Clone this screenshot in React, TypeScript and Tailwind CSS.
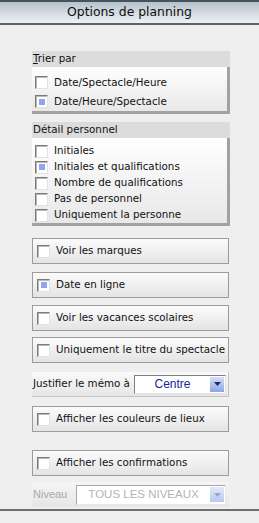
import React from 'react';

const Check: React.FC<{ checked?: boolean }> = ({ checked }) => (
  <span className="w-[13px] h-[13px] shrink-0 flex items-center justify-center bg-white border border-t-[#7a7a7a] border-l-[#7a7a7a] border-r-[#e2e2e2] border-b-[#e2e2e2] shadow-[inset_1px_1px_0_#b8b8b8]">
    {checked && <span className="w-[6px] h-[6px] bg-[#8fa5ec]" />}
  </span>
);

const GroupRow: React.FC<{ label: string; checked?: boolean; h: string }> = ({ label, checked, h }) => (
  <div className={`flex items-center gap-[6px] pl-[3px] ${h}`}>
    <Check checked={checked} />
    <span className="text-[10.3px] text-[#111]">{label}</span>
  </div>
);

const OptionBox: React.FC<{ label: string; checked?: boolean; mt: string }> = ({ label, checked, mt }) => (
  <div className={`w-[197px] h-[26px] ${mt} flex items-center gap-[6px] pl-[4px] border border-[#9c9c9c] bg-gradient-to-b from-[#fbfbfb] to-[#e4e4e4]`}>
    <Check checked={checked} />
    <span className="text-[10.3px] text-[#111]">{label}</span>
  </div>
);

const Arrow: React.FC<{ disabled?: boolean }> = ({ disabled }) => (
  <span
    className={`w-[14px] h-[15px] flex items-center justify-center bg-gradient-to-b ${
      disabled ? 'from-[#e2e9f8] to-[#b8c8ee]' : 'from-[#d6e0f6] to-[#8aa6e6]'
    }`}
  >
    <svg width="7" height="4" viewBox="0 0 7 4">
      <path d="M0 0 H7 L3.5 4 Z" fill={disabled ? '#9aa6c4' : '#1c2a5c'} />
    </svg>
  </span>
);

export default function App() {
  return (
    <div className="w-[259px] h-[523px] bg-[#efefef] flex flex-col font-['DejaVu_Sans',sans-serif] overflow-hidden">
      <div className="h-[25px] shrink-0 border-t-2 border-b-2 border-t-[#48525a] border-b-[#5a6266] bg-gradient-to-b from-[#b6c2cb] via-[#d2dae0] to-[#eef2f3] flex items-center justify-center">
        <span className="text-[12.4px] text-[#0e0e0e] leading-none">Options de planning</span>
      </div>

      <div className="pl-[32px] pt-[26px] flex flex-col">
        {/* Trier par */}
        <div className="w-[198px] h-[16px] bg-[#dcdcdc] flex items-center pl-[1px] text-[10.3px] text-[#111]">
          <span>
            <span className="underline">T</span>rier par
          </span>
        </div>
        <div className="w-[198px] pt-[6px] bg-gradient-to-b from-white to-[#e8e8e8] border-r-[3px] border-b-[3px] border-[#a2a2a2]">
          <GroupRow label="Date/Spectacle/Heure" h="h-[19px]" />
          <GroupRow label="Date/Heure/Spectacle" checked h="h-[19px]" />
        </div>

        {/* Détail personnel */}
        <div className="w-[198px] h-[16px] mt-[8px] bg-[#dcdcdc] flex items-center pl-[1px] text-[10.3px] text-[#111]">
          Détail personnel
        </div>
        <div className="w-[198px] pt-[5px] bg-gradient-to-b from-white to-[#e8e8e8] border-r-[3px] border-b-[3px] border-[#a2a2a2]">
          <GroupRow label="Initiales" h="h-[16px]" />
          <GroupRow label="Initiales et qualifications" checked h="h-[16px]" />
          <GroupRow label="Nombre de qualifications" h="h-[16px]" />
          <GroupRow label="Pas de personnel" h="h-[16px]" />
          <GroupRow label="Uniquement la personne" h="h-[16px]" />
        </div>

        <OptionBox label="Voir les marques" mt="mt-[12px]" />
        <OptionBox label="Date en ligne" checked mt="mt-[8px]" />
        <OptionBox label="Voir les vacances scolaires" mt="mt-[7px]" />
        <OptionBox label="Uniquement le titre du spectacle" mt="mt-[6px]" />

        {/* Justifier */}
        <div className="w-[197px] h-[25px] mt-[9px] flex items-center pl-[1px] border-r border-b border-[#c4c4c4] bg-gradient-to-b from-[#fafafa] to-[#e6e6e6]">
          <span className="text-[10.3px] text-[#111] w-[101px]">Justifier le mémo à</span>
          <div className="w-[92px] h-[19px] flex items-center bg-white border border-t-[#808080] border-l-[#808080] border-r-[#e4e4e4] border-b-[#e4e4e4] pr-[1px]">
            <span className="flex-1 text-center font-['Liberation_Sans',sans-serif] text-[12px] text-[#1c1c9c]">Centre</span>
            <Arrow />
          </div>
        </div>

        <OptionBox label="Afficher les couleurs de lieux" mt="mt-[9px]" />
        <OptionBox label="Afficher les confirmations" mt="mt-[18px]" />

        {/* Niveau */}
        <div className="w-[197px] h-[25px] mt-[6px] flex items-center pl-[1px] bg-gradient-to-b from-[#f6f6f6] to-[#e6e6e6]">
          <span className="font-['Liberation_Sans',sans-serif] text-[11px] text-[#a8a8a8] w-[43px]">Niveau</span>
          <div className="w-[150px] h-[20px] flex items-center bg-white border border-t-[#a8a8a8] border-l-[#a8a8a8] border-r-[#e8e8e8] border-b-[#e8e8e8] pr-[1px]">
            <span className="flex-1 text-center font-['Liberation_Sans',sans-serif] text-[11.5px] text-[#b4b4b4]">TOUS LES NIVEAUX</span>
            <Arrow disabled />
          </div>
        </div>
      </div>

      <div className="mt-[2px] h-[2px] bg-[#6e6e6e]" />
    </div>
  );
}
